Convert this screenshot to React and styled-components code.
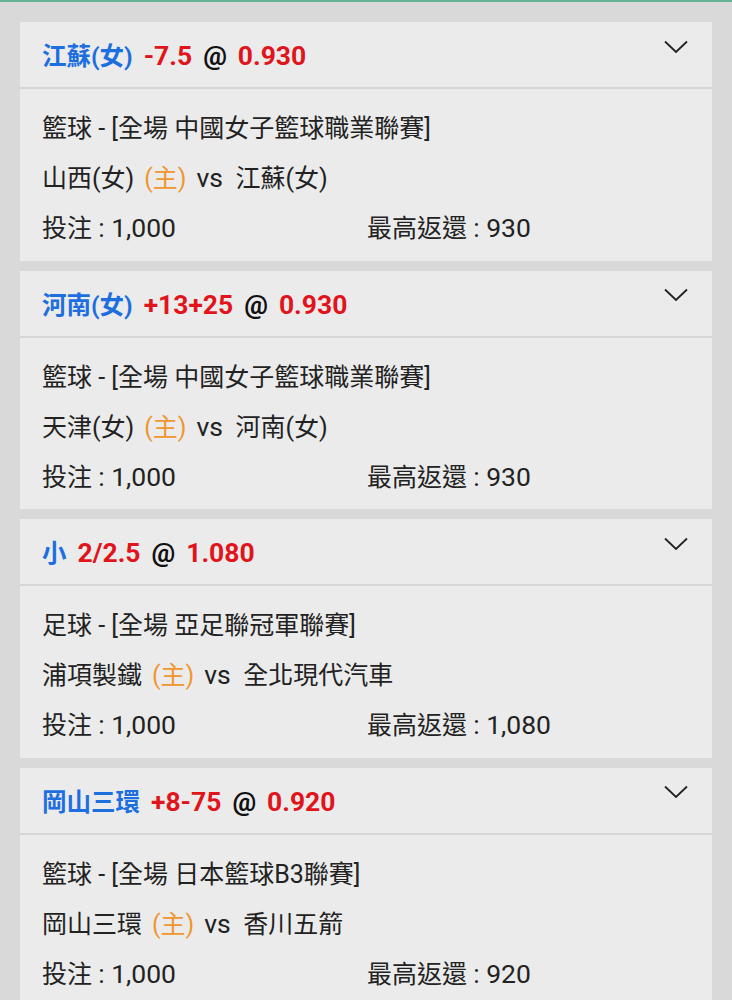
import styled, { createGlobalStyle } from "styled-components";

const GlobalStyle = createGlobalStyle`
  body {
    margin: 0;
    background: #d9d9d9;
    font-family: Roboto, "Noto Sans CJK TC", sans-serif;
  }
`;

const Page = styled.div`
  border-top: 2px solid #67b596;
  padding: 20px 20px 0 20px;
  display: flex;
  flex-direction: column;
  gap: 10px;
`;

const Card = styled.div`
  background: #ebebeb;
`;

const Header = styled.div`
  height: 65px;
  padding: 0 22px;
  display: flex;
  align-items: center;
  justify-content: space-between;
  border-bottom: 2px solid #d5d5d5;
`;

const Title = styled.div`
  font-size: 24.5px;
  font-weight: bold;
  color: #111;
  display: flex;
  align-items: baseline;
  gap: 11px;
`;

const Team = styled.span`
  color: #1d6fe0;
`;

const Latin = styled.span`
  font-size: ${(p) => (p.small ? "1.06em" : "1.08em")};
  color: ${(p) => (p.red ? "#e0141a" : "inherit")};
`;

const Chevron = styled.svg`
  width: 24px;
  height: 14px;
  margin-top: -16px;
  margin-right: 2px;
`;

const Body = styled.div`
  padding: 12px 22px 9.5px 22px;
  color: #222;
  font-size: 25px;
`;

const Row = styled.div`
  height: 50px;
  display: grid;
  grid-template-columns: 325px 1fr;
  align-items: center;
`;

const Wide = styled.span`
  grid-column: 1 / 3;
`;

const Home = styled.span`
  color: #f0962f;
  margin: 0 10px;
`;

const bets = [
  {
    team: "江蘇(女)",
    line: "-7.5",
    odds: "0.930",
    league: "籃球 - [全場 中國女子籃球職業聯賽]",
    home: "山西(女)",
    away: "江蘇(女)",
    stake: "1,000",
    ret: "930",
  },
  {
    team: "河南(女)",
    line: "+13+25",
    odds: "0.930",
    league: "籃球 - [全場 中國女子籃球職業聯賽]",
    home: "天津(女)",
    away: "河南(女)",
    stake: "1,000",
    ret: "930",
  },
  {
    team: "小",
    line: "2/2.5",
    odds: "1.080",
    league: "足球 - [全場 亞足聯冠軍聯賽]",
    home: "浦項製鐵",
    away: "全北現代汽車",
    stake: "1,000",
    ret: "1,080",
  },
  {
    team: "岡山三環",
    line: "+8-75",
    odds: "0.920",
    league: "籃球 - [全場 日本籃球B3聯賽]",
    home: "岡山三環",
    away: "香川五箭",
    stake: "1,000",
    ret: "920",
  },
];

export default function App() {
  return (
    <>
      <GlobalStyle />
      <Page>
        {bets.map((b, i) => (
          <Card key={i}>
            <Header>
              <Title>
                <Team>{b.team}</Team>
                <Latin red>{b.line}</Latin>
                <Latin>@</Latin>
                <Latin red>{b.odds}</Latin>
              </Title>
              <Chevron viewBox="0 0 24 14">
                <path d="M1 1.5 L12 12 L23 1.5" fill="none" stroke="#222" strokeWidth="1.8" />
              </Chevron>
            </Header>
            <Body>
              <Row>
                <Wide>{b.league}</Wide>
              </Row>
              <Row>
                <Wide>
                  {b.home}
                  <Home>(主)</Home>
                  <Latin small>vs</Latin>&nbsp;&nbsp;{b.away}
                </Wide>
              </Row>
              <Row>
                <span>
                  投注 <Latin small>: {b.stake}</Latin>
                </span>
                <span>
                  最高返還 <Latin small>: {b.ret}</Latin>
                </span>
              </Row>
            </Body>
          </Card>
        ))}
      </Page>
    </>
  );
}
